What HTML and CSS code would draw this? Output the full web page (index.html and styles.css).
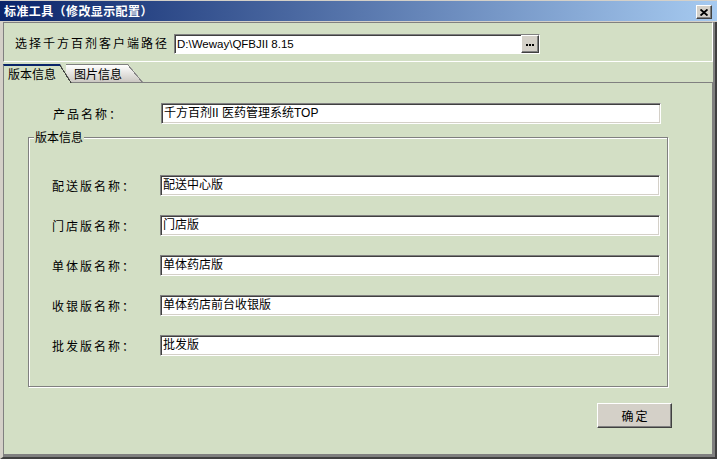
FILE: index.html
```html
<!DOCTYPE html>
<html lang="zh-CN">
<head>
<meta charset="utf-8">
<title>标准工具（修改显示配置）</title>
<link rel="stylesheet" href="styles.css">
</head>
<body>
<div class="window">
  <div class="titlebar">
    <span class="title">标准工具（修改显示配置）</span>
    <button class="close" type="button" aria-label="关闭">
      <svg width="8" height="7" viewBox="0 0 8 7"><path d="M0.5 0.5 L7.5 6.5 M7.5 0.5 L0.5 6.5" stroke="#000" stroke-width="1.9" fill="none"/></svg>
    </button>
  </div>
  <div class="body">
    <div class="pathbar">
      <span class="plabel">选择千方百剂客户端路径</span>
      <div class="pathinput">
        <span class="ptext">D:\Weway\QFBJII 8.15</span>
        <span class="browse"><svg width="8" height="2" viewBox="0 0 8 2"><rect x="0" y="0" width="2" height="2" fill="#000"/><rect x="3" y="0" width="2" height="2" fill="#000"/><rect x="6" y="0" width="2" height="2" fill="#000"/></svg></span>
      </div>
    </div>
    <div class="tabs">
      <div class="tab active">版本信息</div>
      <div class="tab second">图片信息</div>
    </div>
    <div class="panel">
      <div class="row product">
        <span class="label">产品名称：</span>
        <div class="field">千方百剂II 医药管理系统TOP</div>
      </div>
      <div class="group">
        <span class="group-title">版本信息</span>
        <div class="rows">
          <span class="label">配送版名称：</span><div class="field">配送中心版</div>
          <span class="label">门店版名称：</span><div class="field">门店版</div>
          <span class="label">单体版名称：</span><div class="field">单体药店版</div>
          <span class="label">收银版名称：</span><div class="field">单体药店前台收银版</div>
          <span class="label">批发版名称：</span><div class="field">批发版</div>
        </div>
      </div>
      <div class="actions">
        <button class="ok" type="button">确定</button>
      </div>
    </div>
  </div>
</div>
</body>
</html>
```
FILE: styles.css
```css
html, body {
  margin: 0;
  padding: 0;
  background: #d3dfc5;
}
body {
  font-family: "Liberation Sans", "Noto Sans CJK SC", sans-serif;
  font-size: 12px;
  color: #000;
}
.window {
  width: 717px;
  height: 459px;
  display: flex;
  flex-direction: column;
  background: #d3dfc5;
  overflow: hidden;
}
.titlebar {
  height: 22px;
  box-sizing: border-box;
  border-top: 1px solid #d4d0c8;
  border-bottom: 1px solid #d4d0c8;
  background: linear-gradient(to right, #0a246a, #a6caf0);
  display: flex;
  align-items: center;
  justify-content: space-between;
  padding: 0 5px 0 4px;
}
.title {
  color: #fff;
  font-weight: 700;
  letter-spacing: 0.4px;
  line-height: 14px;
  font-family: "Noto Sans CJK SC", sans-serif;
}
.close {
  width: 16px;
  height: 14px;
  box-sizing: border-box;
  margin-top: 2px;
  padding: 0;
  background: #d4d0c8;
  border-top: 1px solid #fff;
  border-left: 1px solid #fff;
  border-right: 1px solid #404040;
  border-bottom: 1px solid #404040;
  box-shadow: inset -1px -1px 0 #808080;
  display: flex;
  align-items: center;
  justify-content: center;
}
.close svg { display: block; }
.body {
  flex: 1;
  display: flex;
  flex-direction: column;
  border-left: 3px solid #d4d0c8;
  border-right: 2px solid #404040;
  border-bottom: 2px solid #404040;
  padding: 0 2px 2px 0;
  box-shadow: inset -2px -2px 0 #808080;
}
.pathbar {
  height: 40px;
  box-sizing: border-box;
  flex: none;
  border-top: 1px solid #808080;
  border-left: 1px solid #808080;
  border-right: 1px solid #fff;
  border-bottom: 1px solid #fff;
  display: flex;
  align-items: flex-start;
  padding: 11px 0 0 11px;
}
.plabel {
  width: 159px;
  letter-spacing: 2px;
  line-height: 20px;
  flex: none;
}
.pathinput {
  width: 366px;
  height: 20px;
  box-sizing: border-box;
  background: #fff;
  border-top: 1px solid #808080;
  border-left: 1px solid #808080;
  border-right: 1px solid #fff;
  border-bottom: 1px solid #fff;
  box-shadow: inset 1px 1px 0 #404040;
  display: flex;
  align-items: flex-start;
}
.ptext {
  padding-left: 2px;
  line-height: 18px;
  font-size: 11.5px;
  flex: 1;
}
.browse {
  width: 18px;
  height: 18px;
  box-sizing: border-box;
  background: #d4d0c8;
  border-top: 1px solid #fff;
  border-left: 1px solid #fff;
  border-right: 1px solid #404040;
  border-bottom: 1px solid #404040;
  box-shadow: inset -1px -1px 0 #808080;
  display: flex;
  align-items: center;
  justify-content: center;
}
.browse svg { display: block; margin-top: 1px; }
.tabs {
  height: 20px;
  flex: none;
  display: flex;
  align-items: flex-end;
}
.tab {
  position: relative;
  box-sizing: border-box;
  height: 18px;
  font-family: "Noto Sans CJK SC", sans-serif;
  font-size: 12px;
}
.tab::after {
  content: "";
  position: absolute;
  right: 0;
  bottom: 0;
}
.tab.active {
  width: 69px;
  height: 19px;
  margin-bottom: -1px;
  z-index: 2;
  background: #d3dfc5;
  border-top: 2px solid #0a246a;
  border-left: 1px solid #808080;
  padding-left: 4px;
  line-height: 15px;
  clip-path: polygon(0 0, 57px 0, 100% 100%, 0 100%);
}
.tab.active::after {
  width: 12px;
  height: 19px;
  background: linear-gradient(to bottom left, transparent 50%, #404040 50%, #404040 calc(50% + 1.2px), transparent calc(50% + 1.2px));
}
.tab.second {
  width: 77px;
  margin-left: -6px;
  z-index: 1;
  background: linear-gradient(#ffffff, #cbc8c2);
  border-top: 1px solid #808080;
  padding-left: 8px;
  line-height: 17px;
  clip-path: polygon(0 0, 62px 0, 100% 100%, 0 100%);
}
.tab.second::after {
  width: 15px;
  height: 18px;
  background: linear-gradient(to bottom left, transparent 50%, #808080 50%, #808080 calc(50% + 1.2px), transparent calc(50% + 1.2px));
}
.panel {
  flex: 1;
  box-sizing: border-box;
  border: 1px solid #808080;
  padding: 20px 0 0 24px;
  display: flex;
  flex-direction: column;
  align-items: flex-start;
}
.row, .rows {
  display: grid;
  grid-template-columns: 108px 500px;
  align-items: center;
}
.row.product {
  padding-left: 25px;
}
.rows {
  row-gap: 19px;
  margin-top: 31px;
  padding-left: 23px;
}
.label {
  letter-spacing: 2px;
  font-family: "Noto Sans CJK SC", sans-serif;
  line-height: 21px;
}
.field {
  height: 21px;
  box-sizing: border-box;
  background: #fff;
  border-top: 1px solid #808080;
  border-left: 1px solid #808080;
  border-right: 1px solid #fff;
  border-bottom: 1px solid #fff;
  box-shadow: inset 1px 1px 0 #404040, inset -1px -1px 0 #d4d0c8;
  padding-left: 2px;
  line-height: 19px;
  white-space: nowrap;
}
.group {
  width: 640px;
  height: 250px;
  box-sizing: border-box;
  margin-top: 13px;
  border: 1px solid #808080;
  box-shadow: inset 1px 1px 0 #fff, 1px 1px 0 #fff;
  display: flex;
  flex-direction: column;
  align-items: flex-start;
}
.group-title {
  margin: -8px 0 0 5px;
  padding: 0 1px;
  background: #d3dfc5;
  line-height: 14px;
  font-family: "Noto Sans CJK SC", sans-serif;
}
.actions {
  align-self: stretch;
  display: flex;
  justify-content: flex-end;
  margin-top: 16px;
  padding-right: 40px;
}
.ok {
  width: 75px;
  height: 25px;
  box-sizing: border-box;
  background: #d4d0c8;
  border-top: 1px solid #fff;
  border-left: 1px solid #fff;
  border-right: 1px solid #404040;
  border-bottom: 1px solid #404040;
  box-shadow: inset -1px -1px 0 #808080;
  font-family: "Noto Sans CJK SC", sans-serif;
  font-size: 12px;
  letter-spacing: 2px;
  padding: 0 0 0 2px;
  color: #000;
}
```
